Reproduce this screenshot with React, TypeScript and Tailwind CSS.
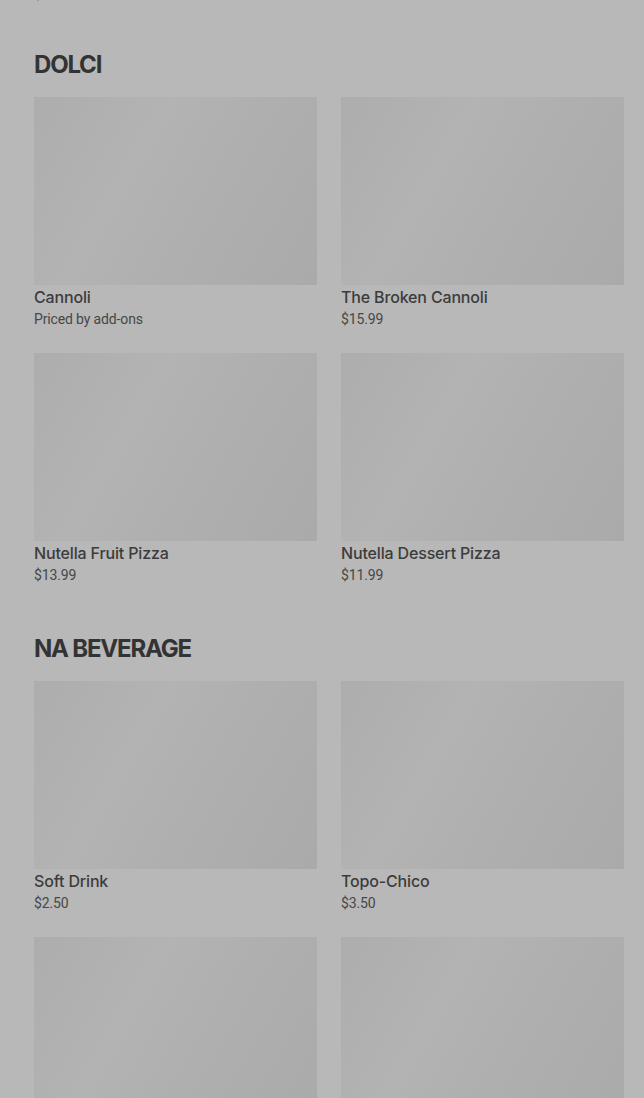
const sections = [
  {
    title: "DOLCI",
    spacing: "mt-[47px]",
    items: [
      { name: "Cannoli", price: "Priced by add-ons" },
      { name: "The Broken Cannoli", price: "$15.99" },
      { name: "Nutella Fruit Pizza", price: "$13.99" },
      { name: "Nutella Dessert Pizza", price: "$11.99" },
    ],
  },
  {
    title: "NA BEVERAGE",
    spacing: "mt-[48px]",
    items: [
      { name: "Soft Drink", price: "$2.50" },
      { name: "Topo-Chico", price: "$3.50" },
      { name: "Sparkling Water", price: "$3.00" },
      { name: "Iced Tea", price: "$2.50" },
    ],
  },
];

function MenuCard({ name, price }: { name: string; price: string }) {
  return (
    <div className="flex flex-col">
      <div className="h-[188px] w-full bg-[linear-gradient(120deg,#adadad_0%,#b3b3b3_35%,#afafaf_60%,#aaaaaa_100%)]" />
      <p className="font-['Inter',sans-serif] text-[16px] leading-6 font-medium tracking-[-0.01em] text-[#3c3c3c]">
        {name}
      </p>
      <p className="text-[14px] leading-5 tracking-[-0.01em] text-[#474747]">{price}</p>
    </div>
  );
}

export default function App() {
  return (
    <div
      className="min-h-screen bg-[#b8b8b8] pl-[34px] pr-[20px]"
      style={{ fontFamily: "Roboto, 'Liberation Sans', sans-serif" }}
    >
      {/* tail of the previous section, scrolled mostly out of view */}
      <div className="h-[2px] overflow-hidden flex flex-col justify-end">
        <p className="text-[14px] leading-[15px] text-[#474747]">$12.99</p>
      </div>
      {sections.map((section) => (
        <section key={section.title} className={section.spacing}>
          <h2 className="font-['Inter',sans-serif] text-[24px] leading-8 font-bold tracking-[-0.05em] text-[#333333] mb-[16px]">
            {section.title}
          </h2>
          <div className="grid grid-cols-2 gap-x-6 gap-y-6">
            {section.items.map((item) => (
              <MenuCard key={item.name} {...item} />
            ))}
          </div>
        </section>
      ))}
    </div>
  );
}
